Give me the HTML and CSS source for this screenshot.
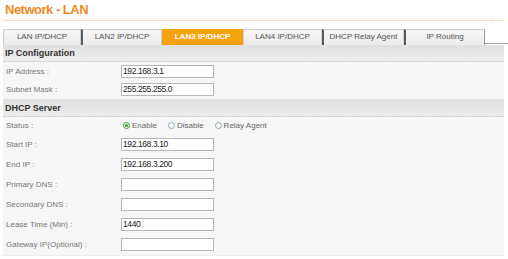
FILE: index.html
```html
<!DOCTYPE html>
<html lang="en">
<head>
    <meta charset="UTF-8">
    <title>Network - LAN</title>
    <link rel="stylesheet" href="styles.css">
</head>
<body>

<h1 class="title">Network - LAN</h1>

<!-- Tabs -->
<div class="tabs">
    <div class="tab t1">LAN IP/DHCP</div>
    <div class="tab t2 sep">LAN2 IP/DHCP</div>
    <div class="tab t3 active">LAN3 IP/DHCP</div>
    <div class="tab t4">LAN4 IP/DHCP</div>
    <div class="tab t5 sep">DHCP Relay Agent</div>
    <div class="tab t6 sep last">IP Routing</div>
    <div class="tab-fill"></div>
</div>

<div class="panel">
    <div class="sec-head">IP Configuration</div>
    <div class="row short"><label>IP Address :</label><input class="field" value="192.168.3.1"></div>
    <div class="row short"><label>Subnet Mask :</label><input class="field" value="255.255.255.0"></div>

    <div class="sec-head tall">DHCP Server</div>
    <div class="row status">
        <label>Status :</label>
        <div class="radios">
            <span class="opt"><input type="radio" name="st" checked>Enable</span>
            <span class="opt"><input type="radio" name="st">Disable</span>
            <span class="opt"><input type="radio" name="st">Relay Agent</span>
        </div>
    </div>
    <div class="row"><label>Start IP :</label><input class="field" value="192.168.3.10"></div>
    <div class="row"><label>End IP :</label><input class="field" value="192.168.3.200"></div>
    <div class="row"><label>Primary DNS :</label><input class="field" value=""></div>
    <div class="row"><label>Secondary DNS :</label><input class="field" value=""></div>
    <div class="row"><label>Lease Time (Min) :</label><input class="field" value="1440"></div>
    <div class="row"><label>Gateway IP(Optional) :</label><input class="field" value=""></div>
</div>

</body>
</html>
```

FILE: styles.css
```css
* { margin: 0; padding: 0; box-sizing: border-box; }
body { background: #fff; font-family: "Liberation Sans", Arial, sans-serif; color: #555; }

.title { margin: 0 4px 0 3px; padding: 2px 0 0 2px; height: 21px; font-size: 13px; letter-spacing: -0.5px; font-weight: bold; color: #f0891d; border-bottom: 1px dotted #f2c58a; }

/* Tabs */
.tabs { display: flex; margin: 8px 0 0 3px; height: 16px; }
.tab { height: 16px; line-height: 14px; text-align: center; font-size: 8px; color: #555; background: linear-gradient(#f6f6f6, #ebebeb); border: 1px solid #cfcfcf; border-bottom: none; }
.tab.sep { border-left: 2px solid #5a5a5a; }
.tab.last { border-right: 1px solid #9a9a9a; }
.tab.active { background: #f5a20f; border-color: #f5a20f; color: #fff; font-weight: bold; }
.t1 { width: 78px; }
.t2 { width: 81px; }
.t3 { width: 81px; }
.t4 { width: 79px; }
.t5 { width: 82px; }
.t6 { width: 81px; }
.tab-fill { flex: 1; border-bottom: 1px solid #a0a0a0; height: 15px; }

/* Panel */
.panel { margin-left: 3px; width: 501px; background: #f6f6f6; border-bottom: 1px solid #ececec; padding-bottom: 1px; }
.sec-head { height: 17px; line-height: 17px; padding-left: 2px; font-size: 9px; font-weight: bold; color: #333; background: linear-gradient(#e0e0e0, #ededed); border-bottom: 1px dashed #d2d2d2; }
.sec-head.tall { height: 18px; margin-top: 1px; line-height: 18px; }

.row { display: flex; align-items: center; height: 20px; }
.row.short { height: 18px; }
.row.status { height: 17px; }
.row label { width: 118px; padding-left: 3px; font-size: 8px; color: #777; }
.field { width: 93px; height: 13px; border: 1px solid #b4b8bc; background: #fff; font-family: "Liberation Sans", Arial, sans-serif; font-size: 8.5px; letter-spacing: -0.4px; color: #222; padding: 0 1px; outline: none; }

/* Radios */
.radios { display: flex; gap: 11px; padding-left: 2px; font-size: 8px; color: #666; }
.opt { display: flex; align-items: center; gap: 1px; }
.opt input { appearance: none; width: 7px; height: 7px; border: 1px solid #8fa9b8; border-radius: 50%; background: #fff; margin: 0 1px 0 0; position: relative; }
.opt input:checked { border-color: #3d9a35; }
.opt input:checked::after { content: ""; position: absolute; left: 1px; top: 1px; width: 3px; height: 3px; border-radius: 50%; background: #3d9a35; }
```
